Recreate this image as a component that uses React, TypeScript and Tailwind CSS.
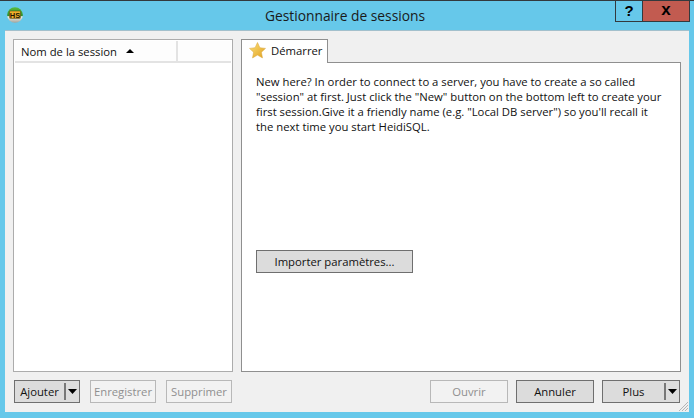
import React from "react";

function Btn({ w, children, disabled, split, ml }: { w: string; children: React.ReactNode; disabled?: boolean; split?: boolean; ml?: string }) {
  return (
    <div className={`${w} ${ml ?? ""} h-[23px] flex items-center border ${disabled ? "border-[#b8b8b8] bg-[#f2f2f2] text-[#8f8f8f]" : "border-[#6f6f6f] bg-[#dcdcdc] text-[#111]"}`}>
      <span className="flex-1 text-center leading-[21px]">{children}</span>
      {split && (
        <span className="flex items-center h-[19px]">
          <span className="w-[2px] h-[17px] bg-[#777] mr-[2px]" />
          <svg width="9" height="5" viewBox="0 0 9 5" className="mr-[2px]"><path d="M0 0H9L4.5 5Z" fill="#000" /></svg>
        </span>
      )}
    </div>
  );
}

function Logo() {
  return (
    <svg width="16" height="16" viewBox="0 0 16 16">
      <defs>
        <linearGradient id="lg" x1="0" y1="0" x2="0" y2="1">
          <stop offset="0" stopColor="#58bb3f" />
          <stop offset="0.58" stopColor="#2f8a25" />
          <stop offset="0.6" stopColor="#f2f2ea" />
          <stop offset="1" stopColor="#a3a39a" />
        </linearGradient>
      </defs>
      <circle cx="8" cy="8" r="7.8" fill="url(#lg)" />
      <rect x="2.5" y="4" width="11" height="7.5" rx="1" fill="#eeb02a" stroke="#4b3a12" strokeWidth="0.5" />
      <text x="8" y="10.5" textAnchor="middle" fontSize="7.5" fontWeight="700" fill="#1f1404" fontFamily="'Liberation Sans', sans-serif">HS</text>
    </svg>
  );
}

export default function App() {
  return (
    <div className="w-[694px] h-[418px] overflow-hidden bg-[#66c8ea] flex flex-col text-[11.3px] font-['Open_Sans','Noto_Sans',sans-serif] border-t border-[#33393d]">
      <div className="h-[29px] shrink-0 flex relative">
        <div className="w-[30px] pl-[7px] pt-[6px]"><Logo /></div>
        <div className="flex-1 text-center text-[13.8px] leading-[30px] text-[#1a1a1a] pl-[45px]">Gestionnaire de sessions</div>
        <div className="flex h-[21px] mr-[4px] border border-t-0 border-[#33393d] text-black font-['Liberation_Sans',sans-serif] font-bold">
          <div className="w-[27px] text-center text-[15px] leading-[20px] border-r border-[#33393d]">?</div>
          <div className="w-[46px] text-center text-[17px] leading-[17px] bg-[#c25b50]">x</div>
        </div>
      </div>
      <div className="flex-1 mx-[5px] mb-[6px] bg-[#f0f0f0] border-t border-[#a3c0cc] flex flex-col px-[8px] pt-[8px] relative min-h-0">
        <div className="flex gap-[8px] h-[333px] shrink-0">
          <div className="w-[220px] bg-white border border-[#acacac] p-px">
            <div className="h-[22px] flex border-b-2 border-[#e3e3e3] bg-[#fdfdfd]">
              <div className="w-[163px] pl-[6px] flex items-center gap-[9px] border-r-2 border-[#e3e3e3] text-[#111] leading-[21px]">
                <span>Nom de la session</span>
                <svg width="8" height="4" viewBox="0 0 8 4"><path d="M4 0L8 4H0Z" fill="#000" /></svg>
              </div>
            </div>
          </div>
          <div className="flex-1 flex flex-col min-w-0">
            <div className="h-[24px] w-[87px] flex items-center bg-white border border-b-0 border-[#8f8f8f] pl-[7px] gap-[5px] relative z-10 -mb-px text-[#111]">
              <svg width="17" height="17" viewBox="0 0 17 17" className="-mt-[2px]">
                <defs>
                  <linearGradient id="st" x1="0" y1="0" x2="1" y2="1">
                    <stop offset="0" stopColor="#fde27a" />
                    <stop offset="1" stopColor="#e0a020" />
                  </linearGradient>
                </defs>
                <path d="M8.5 0.5L10.9 5.7L16.5 6.4L12.4 10.2L13.5 15.9L8.5 13.1L3.5 15.9L4.6 10.2L0.5 6.4L6.1 5.7Z" fill="url(#st)" stroke="#d9a53a" strokeWidth="0.5" />
              </svg>
              <span>Démarrer</span>
            </div>
            <div className="flex-1 bg-white border border-[#8f8f8f] px-[14px] pt-[11px] text-[#111] leading-[15px]">
              <p className="whitespace-nowrap">
                New here? In order to connect to a server, you have to create a so called<br />
                "session" at first. Just click the "New" button on the bottom left to create your<br />
                first session.Give it a friendly name (e.g. "Local DB server") so you'll recall it<br />
                the next time you start HeidiSQL.
              </p>
              <div className="mt-[116px]"><Btn w="w-[157px]">Importer paramètres...</Btn></div>
            </div>
          </div>
        </div>
        <div className="flex mt-[8px] mr-px">
          <Btn w="w-[66px]" ml="ml-px" split>Ajouter</Btn>
          <Btn w="w-[66px]" ml="ml-[10px]" disabled>Enregistrer</Btn>
          <Btn w="w-[66px]" ml="ml-[10px]" disabled>Supprimer</Btn>
          <div className="flex-1" />
          <Btn w="w-[78px]" disabled>Ouvrir</Btn>
          <Btn w="w-[78px]" ml="ml-[8px]">Annuler</Btn>
          <Btn w="w-[78px]" ml="ml-[8px]" split>Plus</Btn>
        </div>
        <svg width="12" height="12" viewBox="0 0 12 12" className="absolute right-0 bottom-0">
          <path d="M11 2L2 11M11 5L5 11M11 8L8 11" stroke="#b5b5b5" strokeWidth="1" />
        </svg>
      </div>
    </div>
  );
}
